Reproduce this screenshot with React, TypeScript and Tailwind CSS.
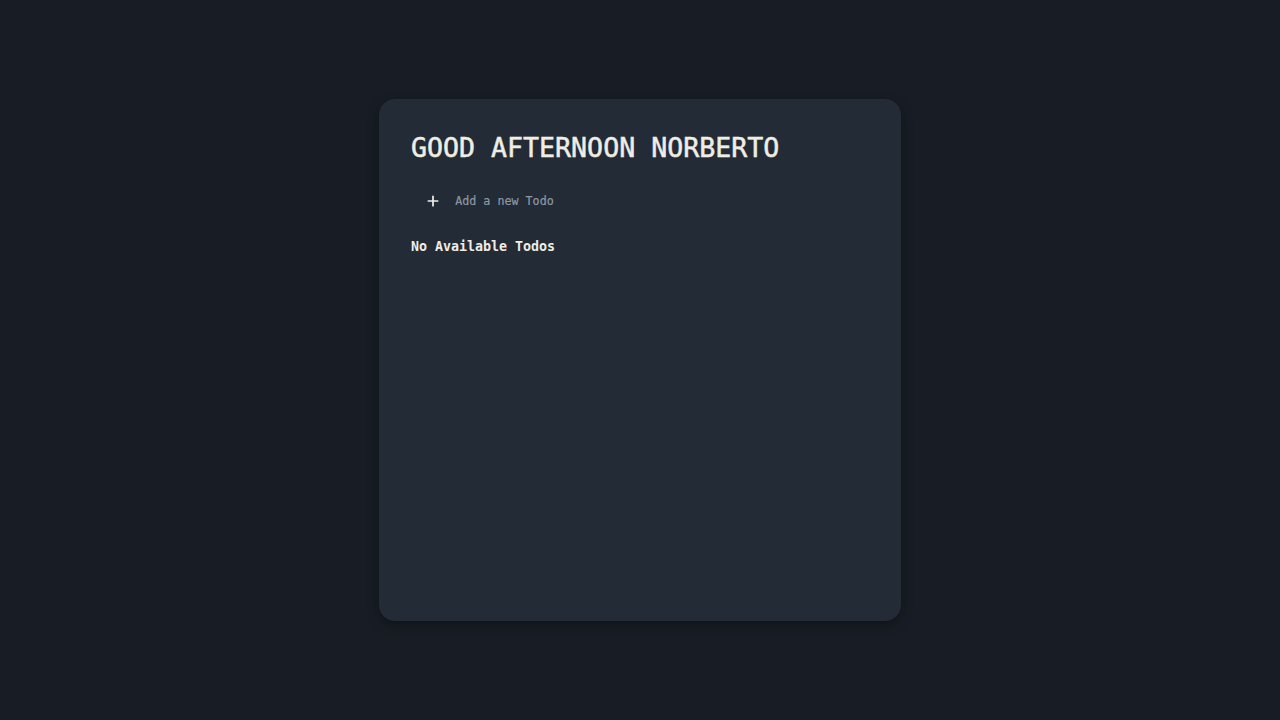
import { Plus } from "lucide-react";

const mono = "font-['DejaVu_Sans_Mono','Liberation_Mono',monospace]";

export default function App() {
  return (
    <div className={`flex min-h-screen items-center justify-center bg-[#181d25] ${mono}`}>
      <main className="flex h-[522px] w-[522px] flex-col rounded-2xl bg-[#222b36] px-8 pt-[30px] shadow-[0_4px_12px_rgba(0,0,0,0.35)]">
        <h1 className="text-[26.6px] leading-[38px] tracking-normal text-[#f0ede4] [-webkit-text-stroke:0.5px_#f0ede4]">
          GOOD AFTERNOON NORBERTO
        </h1>

        <form className="mt-[22px] flex items-center gap-[11px] pl-[11px]">
          <button type="button" className="flex size-6 items-center justify-center text-[#f0ede4]">
            <Plus className="size-[16px]" strokeWidth={2.6} />
          </button>
          <input
            type="text"
            placeholder="Add a new Todo"
            className="w-full bg-transparent text-[11.7px] leading-4 text-[#f0ede4] outline-none placeholder:text-[#8d98a5] [-webkit-text-stroke:0.2px_#8d98a5]"
          />
        </form>

        <p className="mt-[24px] text-[13.3px] leading-5 font-bold text-[#f0ede4]">
          No Available Todos
        </p>
      </main>
    </div>
  );
}
